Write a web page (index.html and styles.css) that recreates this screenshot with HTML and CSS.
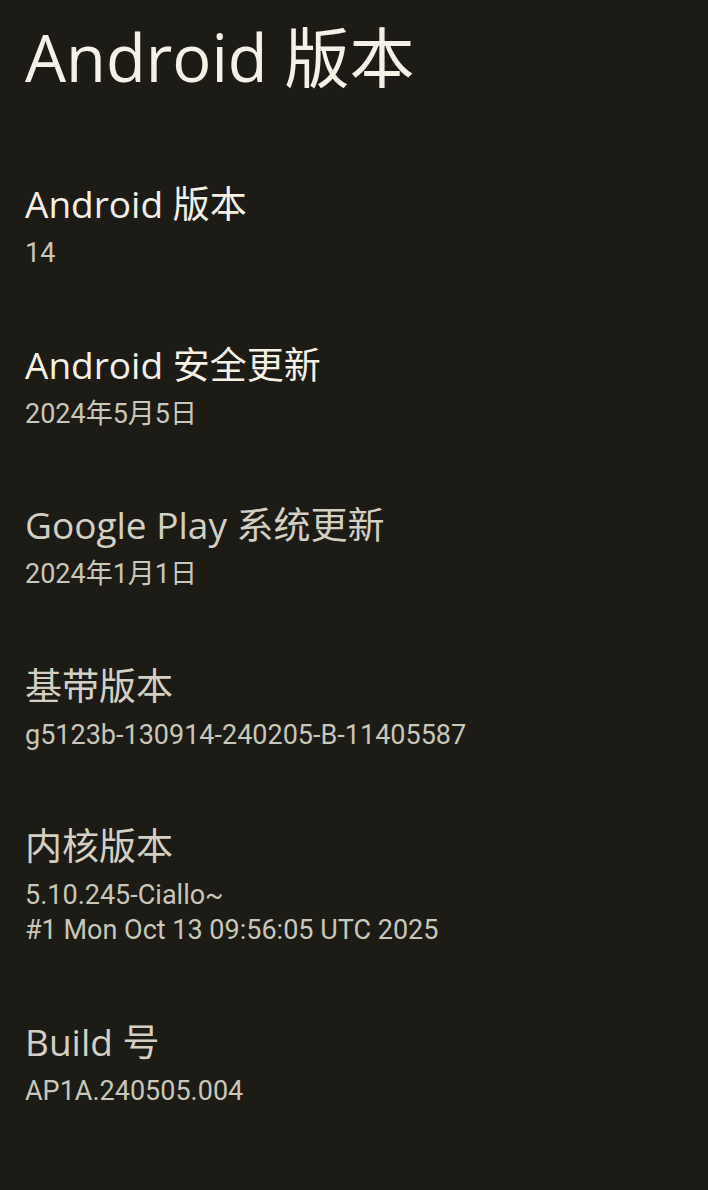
FILE: index.html
```html
<!DOCTYPE html>
<html>
  <head>
    <meta charset="utf-8">
    <title>Android 版本</title>
    <link rel="stylesheet" href="styles.css">
  </head>
  <body>
    <h1 class="page-title">Android 版本</h1>
    <div class="pref-list">
      <div class="pref">
        <div class="pref-title">Android 版本</div>
        <div class="pref-summary">14</div>
      </div>
      <div class="pref">
        <div class="pref-title">Android 安全更新</div>
        <div class="pref-summary">2024年5月5日</div>
      </div>
      <div class="pref dim">
        <div class="pref-title">Google Play 系统更新</div>
        <div class="pref-summary">2024年1月1日</div>
      </div>
      <div class="pref dim">
        <div class="pref-title">基带版本</div>
        <div class="pref-summary">g5123b-130914-240205-B-11405587</div>
      </div>
      <div class="pref dim">
        <div class="pref-title">内核版本</div>
        <div class="pref-summary">5.10.245-Ciallo~<br>#1 Mon Oct 13 09:56:05 UTC 2025</div>
      </div>
      <div class="pref dim">
        <div class="pref-title">Build 号</div>
        <div class="pref-summary">AP1A.240505.004</div>
      </div>
    </div>
  </body>
</html>
```

FILE: styles.css
```css
html, body {
  background: #1c1b16;
}

body {
  color: #f5f1e6;
  font-family: "Open Sans", "Noto Sans CJK SC", sans-serif;
  margin: 0;
  padding: 17px 25px 0 25px;
}

.page-title {
  font-size: 65px;
  font-weight: 400;
  line-height: 80px;
  margin: 0;
}

.pref-list {
  display: flex;
  flex-direction: column;
  gap: 68.5px;
  padding-top: 82px;
}

.pref-title {
  font-size: 37px;
  line-height: 50px;
}

.pref-summary {
  color: #c9c7b9;
  font-family: Roboto, "Noto Sans CJK SC", sans-serif;
  font-size: 27px;
  line-height: 35px;
  margin-top: 7px;
}

.dim .pref-title {
  color: #d3d0c3;
}
```
